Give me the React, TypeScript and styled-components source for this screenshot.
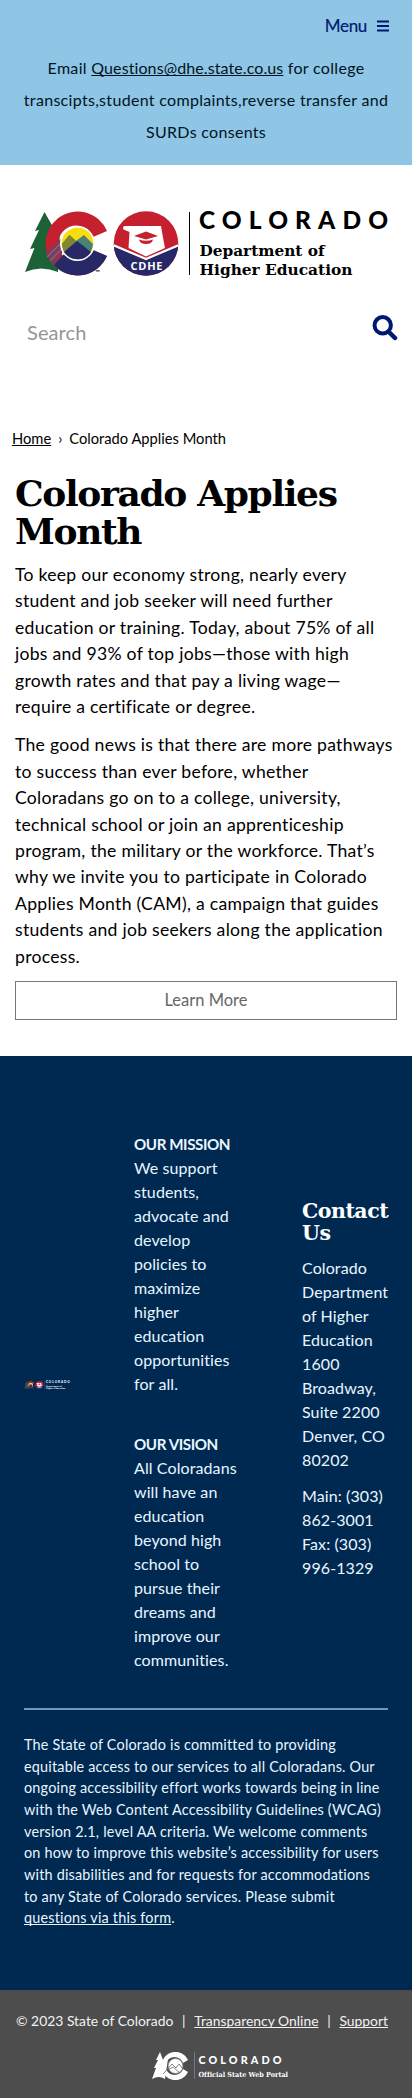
import React from "react";
import styled, { createGlobalStyle } from "styled-components";

const GlobalStyle = createGlobalStyle`
  * { box-sizing: border-box; }
  body { margin: 0; background: #fff; color: #000; font-family: Lato, "Open Sans", sans-serif; font-variant-ligatures: none; }
  a { color: inherit; text-decoration-skip-ink: none; }
  p, h1, h2 { margin: 0; }
`;

const slab = `"DejaVu Serif", serif`;

const Page = styled.div`
  width: 412px;
  height: 2098px;
  display: flex;
  flex-direction: column;
  overflow: hidden;
`;
const TopBar = styled.header`
  height: 165px;
  background: #8fc5e5;
  display: flex;
  flex-direction: column;
`;
const MenuButton = styled.button`
  display: flex;
  align-items: center;
  align-self: flex-end;
  gap: 10px;
  height: 52px;
  margin: 0 23px 0 0;
  padding: 0;
  border: 0;
  background: none;
  color: #001970;
  font: 400 17px/52px Lato, sans-serif;
  letter-spacing: -0.3px;
  -webkit-text-stroke: 0.2px;
`;
const Notice = styled.p`
  font-size: 16px;
  line-height: 32px;
  letter-spacing: 0.31px;
  text-align: center;
  white-space: nowrap;
  color: #001423;
`;
const Mail = styled.a`
  letter-spacing: 0.1px;
`;
const Brand = styled.div`
  height: 125px;
  padding: 46px 0 0 24px;
`;
const LogoSvg = styled.svg`
  display: block;
  overflow: visible;
`;
const Search = styled.form`
  height: 138px;
  display: flex;
  justify-content: space-between;
  padding: 25px 14px 0 27px;
`;
const SearchInput = styled.span`
  font: 400 20px/34px Lato, sans-serif;
  color: #959595;
  letter-spacing: 0.1px;
`;
const Crumbs = styled.nav`
  height: 33px;
  padding-left: 12px;
  display: flex;
  gap: 7px;
  font-size: 14.7px;
  line-height: 21px;
  white-space: nowrap;
`;
const Title = styled.h1`
  padding-left: 15px;
  margin-bottom: 12px;
  height: 89px;
  padding-top: 13px;
  font: 700 36px/38px ${slab};
  letter-spacing: -1.35px;
`;
const Body = styled.p<{ $after: number }>`
  padding-left: 15px;
  margin-bottom: ${(p) => p.$after}px;
  font-size: 17.6px;
  line-height: 26.4px;
  letter-spacing: 0.27px;
  white-space: nowrap;
`;
const Learn = styled.a`
  height: 39px;
  flex: none;
  margin: 0 15px 36px;
  border: 1.5px solid #777;
  color: #666;
  text-align: center;
  font-size: 16.5px;
  line-height: 36px;
`;
const Footer = styled.footer`
  height: 934px;
  background: #002952;
  color: #e8f6ff;
  padding: 76px 24px 0;
`;
const Columns = styled.div`
  display: grid;
  grid-template-columns: 110px 168px 86px;
  height: 576px;
`;
const LogoCell = styled.div`
  padding-top: 249px;
`;
const Column = styled.div<{ $top?: number }>`
  padding-top: ${(p) => p.$top || 0}px;
  font-size: 16px;
  line-height: 24px;
  letter-spacing: 0.1px;
  white-space: nowrap;
`;
const Statement = styled.p<{ $after: number }>`
  margin-bottom: ${(p) => p.$after}px;
`;
const StatementName = styled.strong`
  font-size: 15.2px;
  letter-spacing: -0.45px;
`;
const ContactTitle = styled.h2`
  font: 700 20.5px/22px ${slab};
  letter-spacing: -0.5px;
  color: #fff;
  margin-bottom: 12px;
`;
const Rule = styled.hr`
  margin: 0 0 24px;
  border: 0;
  height: 2px;
  background: #7099b8;
`;
const Accessibility = styled.p`
  font-size: 14.4px;
  line-height: 21.65px;
  letter-spacing: 0.2px;
  white-space: nowrap;
`;
const Legal = styled.div`
  height: 108px;
  background: #4d4d4d;
  border-top: 2px solid #50494c;
  color: #f2f2f2;
`;
const LegalLinks = styled.div`
  display: flex;
  justify-content: space-between;
  padding: 18px 24px 0 16px;
  font-size: 13.9px;
  line-height: 22px;
  white-space: nowrap;
`;
const Portal = styled.div`
  padding: 19px 0 0 152px;
`;

function StateLogo({ width, onDark = false }: { width: number; onDark?: boolean }) {
  const ink = onDark ? "#fff" : "#000";
  const clip = onDark ? "seal-small" : "seal";
  return (
    <LogoSvg width={width} height={(width * 72) / 366} viewBox="0 0 366 72">
      <path d="M20.500 1 L11 20 L15 19 L6 38 L10.500 37 L1 61 Q17 54 34 61 L36 20 L29 16 Z" fill="#1d6237" />
      <path d="M83 20 A32 32 0 1 0 83 45 L69 39 A18 18 0 1 1 69 26 Z" fill="#c6202f" />
      <path d="M30 54 L53 29 L60 46 L69 39 L83 45 A32 32 0 0 1 30 54 Z" fill="#262868" />
      <path d="M22 42 L39 26 L45 32 L30 54 Q24 48 22 42 Z" fill="#7d3b5c" />
      <path d="M23 46 L39 30 M26 50 L42 33" stroke="#91627c" strokeWidth="1.300" />
      <circle cx="53.500" cy="32.500" r="17.500" fill="#fff" />
      <circle cx="53.500" cy="32.500" r="15.800" fill="#f9dd0c" />
      <path d="M38 33 L45.500 24 L52 30 L60 24 L69 33 Q67 48 53.500 48.300 Q40 48 38 33Z" fill="#4c8178" />
      <path d="M38 33 L45.500 24 L52 30 L40 41Z" fill="#81862f" />
      <path d="M40 41 L53 30 L67 41 Q62 48.300 53.500 48.300 Q45 48 40 41Z" fill="#262868" />
      {!onDark && <text x="71.500" y="63" fontFamily="Lato" fontSize="6" fontWeight="700" fill={ink}>™</text>}
      <clipPath id={clip}><circle cx="122" cy="32.500" r="32.300" /></clipPath>
      <g clipPath={`url(#${clip})`}>
        <rect x="89" width="66" height="66" fill="#c6202f" />
        <path d="M89 33 L122 49 L155 33 V66 H89Z" fill="#262868" />
        <path d="M89 34 L122 48 L155 34" fill="none" stroke="#fff" strokeWidth="2.200" />
      </g>
      <path d="M101 15 H137 Q139 27 141 37 L122 45.500 L104.500 37 L105.500 21 L101 19 A2 2 0 1 1 101 15Z" fill="#fff" />
      <path d="M110 25 L122 20.500 L134 25 L122 28.500Z M115 28.500 Q122 31 129 28.500 Q128 33 122 33 Q116 33 115 28.500Z" fill="#c6202f" />
      <text x="106.500" y="58.500" fontFamily="Open Sans" fontSize="11" fontWeight="700" textLength="32" fill="#fff">CDHE</text>
      <path d="M165.500 1 V64" stroke={ink} strokeWidth="1" />
      <text x="175" y="18.300" fontFamily="Lato" fontSize="24.500" fontWeight="900" textLength="189" fill={ink}>COLORADO</text>
      <text x="175.500" y="45.300" fontFamily="DejaVu Serif" fontSize="15.500" fontWeight="700" textLength="125" lengthAdjust="spacingAndGlyphs" fill={ink}>Department of</text>
      <text x="175.500" y="64" fontFamily="DejaVu Serif" fontSize="15.500" fontWeight="700" textLength="153" lengthAdjust="spacingAndGlyphs" fill={ink}>Higher Education</text>
    </LogoSvg>
  );
}

function PortalLogo() {
  return (
    <LogoSvg width="138" height="30" viewBox="0 0 138 30">
      <path d="M8 1 L4 9 L6 9 L2 17 L4 17 L0 28 Q7 24 13 28 L16 8 L11 9Z" fill="#fff" />
      <path d="M36 9 A14 14 0 1 0 36 21 L31 18 A9 9 0 1 1 31 12Z" fill="#fff" />
      <circle cx="23.500" cy="15" r="7.500" fill="#fff" stroke="#777" strokeWidth="0.800" />
      <path d="M11 23 L20 13 L24 17 L27 13 L31 18 M16 19 L21 16 L28 22" fill="none" stroke="#666" strokeWidth="0.800" />
      <path d="M42.500 1 V28" stroke="#777" />
      <text x="46.500" y="13.200" fontFamily="Lato" fontSize="10.800" fontWeight="900" textLength="83" fill="#fff">COLORADO</text>
      <text x="46.500" y="25.800" fontFamily="DejaVu Serif" fontSize="7" fontWeight="700" textLength="89.500" lengthAdjust="spacingAndGlyphs" fill="#fff">Official State Web Portal</text>
    </LogoSvg>
  );
}

function Lines({ of }: { of: string[] }) {
  return <>{of.map((line) => <React.Fragment key={line}>{line}<br /></React.Fragment>)}</>;
}

export default function App() {
  return (
    <Page>
      <GlobalStyle />
      <TopBar>
        <MenuButton>
          Menu
          <svg width="12" height="12" viewBox="0 0 12 12"><path d="M0 1.500H12M0 6H12M0 10.500H12" stroke="currentColor" strokeWidth="2" /></svg>
        </MenuButton>
        <Notice>
          Email <Mail href="#mail">Questions@dhe.state.co.us</Mail> for college<br />
          transcipts,student complaints,reverse transfer and<br />
          SURDs consents
        </Notice>
      </TopBar>
      <Brand><StateLogo width={366} /></Brand>
      <Search>
        <SearchInput>Search</SearchInput>
        <svg width="26" height="26" viewBox="0 0 26 26"><circle cx="10.700" cy="10.300" r="8.200" fill="none" stroke="#001970" strokeWidth="4" /><path d="M16.500 16.500 L23 23" stroke="#001970" strokeWidth="4.500" strokeLinecap="round" /></svg>
      </Search>
      <Crumbs><a href="#home">Home</a><span>›</span><span>Colorado Applies Month</span></Crumbs>
      <Title>Colorado Applies<br />Month</Title>
      <Body $after={12}>
        <Lines of={["To keep our economy strong, nearly every", "student and job seeker will need further", "education or training. Today, about 75% of all", "jobs and 93% of top jobs—those with high", "growth rates and that pay a living wage—", "require a certificate or degree."]} />
      </Body>
      <Body $after={11}>
        <Lines of={["The good news is that there are more pathways", "to success than ever before, whether", "Coloradans go on to a college, university,", "technical school or join an apprenticeship", "program, the military or the workforce. That’s", "why we invite you to participate in Colorado", "Applies Month (CAM), a campaign that guides", "students and job seekers along the application", "process."]} />
      </Body>
      <Learn>Learn More</Learn>
      <Footer>
        <Columns>
          <LogoCell><StateLogo width={46} onDark /></LogoCell>
          <Column>
            <Statement $after={36}>
              <StatementName>OUR MISSION</StatementName><br />
              <Lines of={["We support", "students,", "advocate and", "develop", "policies to", "maximize", "higher", "education", "opportunities", "for all."]} />
            </Statement>
            <Statement $after={0}>
              <StatementName>OUR VISION</StatementName><br />
              <Lines of={["All Coloradans", "will have an", "education", "beyond high", "school to", "pursue their", "dreams and", "improve our", "communities."]} />
            </Statement>
          </Column>
          <Column $top={68}>
            <ContactTitle>Contact<br />Us</ContactTitle>
            <Statement $after={12}><Lines of={["Colorado", "Department", "of Higher", "Education", "1600", "Broadway,", "Suite 2200", "Denver, CO", "80202"]} /></Statement>
            <Statement $after={0}><Lines of={["Main: (303)", "862-3001", "Fax: (303)", "996-1329"]} /></Statement>
          </Column>
        </Columns>
        <Rule />
        <Accessibility>
          <Lines of={["The State of Colorado is committed to providing", "equitable access to our services to all Coloradans. Our", "ongoing accessibility effort works towards being in line", "with the Web Content Accessibility Guidelines (WCAG)", "version 2.1, level AA criteria. We welcome comments", "on how to improve this website’s accessibility for users", "with disabilities and for requests for accommodations", "to any State of Colorado services. Please submit"]} />
          <a href="#form">questions via this form</a>.
        </Accessibility>
      </Footer>
      <Legal>
        <LegalLinks><span>© 2023 State of Colorado</span><span>|</span><a href="#transparency">Transparency Online</a><span>|</span><a href="#support">Support</a></LegalLinks>
        <Portal><PortalLogo /></Portal>
      </Legal>
    </Page>
  );
}
